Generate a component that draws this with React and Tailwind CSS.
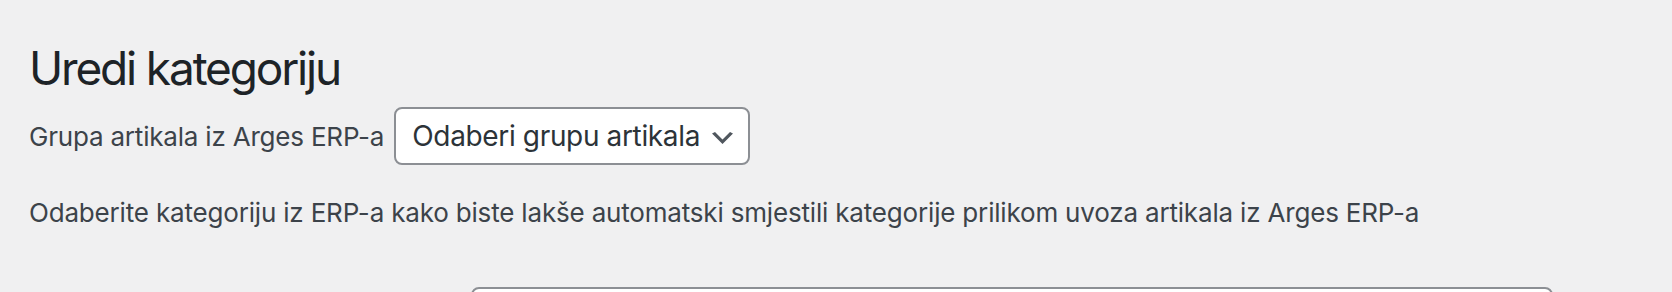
export default function App() {
  const font = { fontFamily: 'Inter, "Noto Sans", sans-serif' };
  return (
    <div className="min-h-[292px] w-[1672px] bg-[#f0f0f1] pl-[29px] pt-[38px] overflow-hidden" style={font}>
      <h1 className="h-[60px] text-[46px] leading-[60px] font-normal text-[#1d2327] tracking-[-0.047em]">
        Uredi kategoriju
      </h1>
      <div className="mt-[9px] flex items-baseline gap-[10px]">
        <label className="text-[26px] leading-[32px] text-[#3c434a] tracking-[-0.2px]">Grupa artikala iz Arges ERP-a</label>
        <div className="flex h-[58px] items-center rounded-[8px] border-2 border-[#8c8f94] bg-white pl-[16px] pr-[15px]">
          <span className="text-[28px] leading-[34px] text-[#2c3338] tracking-[-0.35px]">Odaberi grupu artikala</span>
          <svg className="ml-[12px] mt-[4px]" width="21" height="12" viewBox="0 0 21 12">
            <path d="M3 0l7.5 7.5 7.5-7.5 3 1.5-10.5 10.5-10.5-10.5 3-1.5z" fill="#50575e" />
          </svg>
        </div>
      </div>
      <p className="mt-[30px] text-[26px] leading-[36px] text-[#3c434a] tracking-[-0.18px]">
        Odaberite kategoriju iz ERP-a kako biste lakše automatski smjestili kategorije prilikom uvoza artikala iz Arges ERP-a
      </p>
      <div className="mt-[56px] flex">
        <div className="w-[442px] shrink-0" />
        <div className="h-[60px] w-[1082px] rounded-[8px] border-2 border-[#8c8f94] bg-white" />
      </div>
    </div>
  );
}
